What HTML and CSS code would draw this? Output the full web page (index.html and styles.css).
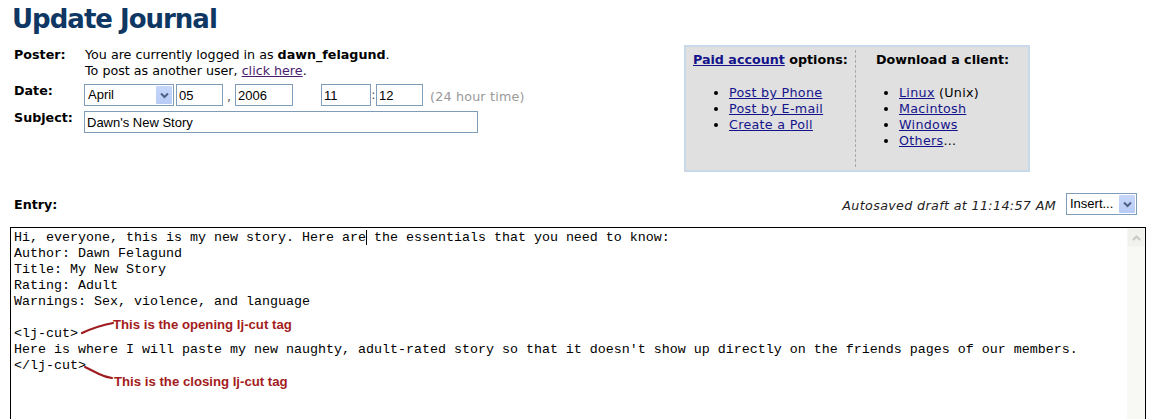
FILE: index.html
```html
<!DOCTYPE html>
<html lang="en">
<head>
<meta charset="UTF-8">
<title>Update Journal</title>
<link rel="stylesheet" href="styles.css">
</head>
<body>
    <h1 class="page-title">Update Journal</h1>

    <div class="top">
        <div class="form-fields">
            <div class="row">
                <span class="label">Poster:</span>
                <div class="value">
                    You are currently logged in as <b>dawn_felagund</b>.<br>
                    To post as another user, <a href="#" class="visited">click here</a>.
                </div>
            </div>
            <div class="row">
                <span class="label">Date:</span>
                <div class="value inline">
                    <span class="combo month">
                        <span class="combo-text">April</span>
                        <span class="combo-btn"><svg width="9" height="7" viewBox="0 0 9 7"><path d="M1 1.5 L4.5 5 L8 1.5" fill="none" stroke="#4d6185" stroke-width="2"/></svg></span>
                    </span>
                    <input type="text" class="field day" value="05">
                    <span class="sep">,</span>
                    <input type="text" class="field year" value="2006">
                    <input type="text" class="field hour" value="11">
                    <span class="sep colon">:</span>
                    <input type="text" class="field minute" value="12">
                    <span class="hint">(24 hour time)</span>
                </div>
            </div>
            <div class="row">
                <span class="label">Subject:</span>
                <div class="value">
                    <input type="text" class="field subject" value="Dawn's New Story">
                </div>
            </div>
        </div>

        <div class="options-box">
            <div class="options-col paid">
                <div class="options-head"><a href="#">Paid account</a> options:</div>
                <ul>
                    <li><a href="#">Post by Phone</a></li>
                    <li><a href="#">Post by E-mail</a></li>
                    <li><a href="#">Create a Poll</a></li>
                </ul>
            </div>
            <div class="options-col clients">
                <div class="options-head">Download a client:</div>
                <ul>
                    <li><a href="#">Linux</a> (Unix)</li>
                    <li><a href="#">Macintosh</a></li>
                    <li><a href="#">Windows</a></li>
                    <li><a href="#">Others</a>...</li>
                </ul>
            </div>
        </div>
    </div>

    <div class="entry-bar">
        <span class="label">Entry:</span>
        <div class="entry-tools">
            <span class="autosave">Autosaved draft at 11:14:57 AM</span>
            <span class="combo insert">
                <span class="combo-text">Insert...</span>
                <span class="combo-btn"><svg width="9" height="7" viewBox="0 0 9 7"><path d="M1 1.5 L4.5 5 L8 1.5" fill="none" stroke="#4d6185" stroke-width="2"/></svg></span>
            </span>
        </div>
    </div>

    <div class="editor">
        <div class="editor-text">
<pre>Hi, everyone, this is my new story. Here are<span class="caret"></span> the essentials that you need to know:
Author: Dawn Felagund
Title: My New Story
Rating: Adult
Warnings: Sex, violence, and language

&lt;lj-cut&gt;
Here is where I will paste my new naughty, adult-rated story so that it doesn't show up directly on the friends pages of our members.
&lt;/lj-cut&gt;</pre>
            <!-- annotations drawn over the text -->
            <svg class="arrows" width="200" height="170" viewBox="0 0 200 170">
                <path d="M71 105 Q86 98 102 95" fill="none" stroke="#9e1b1f" stroke-width="2.2" stroke-linecap="round"/>
                <path d="M74 139 Q84 144 88 146 Q94 149 101 150" fill="none" stroke="#9e1b1f" stroke-width="2" stroke-linecap="round"/>
            </svg>
            <span class="note note-open">This is the opening lj-cut tag</span>
            <span class="note note-close">This is the closing lj-cut tag</span>
        </div>
        <div class="scrollbar">
            <span class="scroll-up"><svg width="9" height="6" viewBox="0 0 9 6"><path d="M1 5 L4.5 1.5 L8 5" fill="none" stroke="#c9c9c4" stroke-width="2"/></svg></span>
        </div>
    </div>
</body>
</html>
```

FILE: styles.css
```css
body {
    margin: 0;
    padding: 0 12px;
    font-family: "DejaVu Sans", Verdana, sans-serif;
    font-size: 12.7px;
    color: #000;
    background: #fff;
}

a {
    color: #14148a;
}

a.visited {
    color: #4a1c6e;
}

.page-title {
    margin: 0;
    padding-top: 3px;
    font-size: 26px;
    line-height: 32px;
    color: #0f3763;
    letter-spacing: -1px;
}

.top {
    display: flex;
    margin-top: 10px;
}

.form-fields {
    width: 672px;
    padding-top: 2px;
    display: flex;
    flex-direction: column;
    gap: 5px;
}

.row {
    display: grid;
    grid-template-columns: 72px 1fr;
    align-items: start;
}

.label {
    font-weight: bold;
    line-height: 16px;
    padding-left: 2px;
}

.value {
    line-height: 16px;
    padding-left: 1px;
}

.value.inline {
    display: flex;
    align-items: center;
    padding-left: 0;
}

.row + .row .label {
    margin-top: -1px;
}

.field {
    box-sizing: border-box;
    height: 22px;
    border: 1px solid #7f9db9;
    padding: 1px 2px;
    margin: 0;
    font-family: "Liberation Sans", Arial, sans-serif;
    font-size: 13px;
    color: #000;
    background: #fff;
}

.day {
    width: 47px;
    margin-left: 2px;
}

.minute {
    width: 47px;
}

.year {
    width: 58px;
}

.hour {
    width: 50px;
    margin-left: 28px;
}

.subject {
    width: 394px;
    margin-left: -1px;
}

.sep {
    width: 12px;
    text-align: center;
    color: #555;
    padding-top: 4px;
}

.sep.colon {
    width: 5px;
    padding-top: 0;
}

.hint {
    margin-left: 7px;
    color: #999;
    padding-top: 3px;
    letter-spacing: 0.2px;
}

.combo {
    box-sizing: border-box;
    display: inline-flex;
    align-items: stretch;
    height: 22px;
    border: 1px solid #7f9db9;
    background: #fff;
    font-family: "Liberation Sans", Arial, sans-serif;
    font-size: 13px;
}

.combo-text {
    flex: 1;
    padding: 2px 0 0 3px;
}

.combo-btn {
    width: 16px;
    margin: 1px;
    display: flex;
    align-items: center;
    justify-content: center;
    background: linear-gradient(#c7d7fb, #b7cbf5);
    border-radius: 1px;
}

.month {
    width: 90px;
}

.insert {
    width: 71px;
}

.options-box {
    box-sizing: border-box;
    width: 346px;
    height: 127px;
    border: 2px solid #cad9ea;
    background: #e0e0e0;
    display: flex;
    padding: 3px 0;
}

.options-col {
    line-height: 16px;
}

.options-col.paid {
    width: 162px;
    padding-left: 7px;
    border-right: 1px dashed #a8a8a8;
}

.options-col.clients {
    padding-left: 20px;
}

.options-head {
    font-weight: bold;
    margin-top: 2px;
    white-space: nowrap;
}

.options-head a {
    color: #14148a;
}

.options-col ul {
    margin: 17px 0 0;
    padding-left: 36px;
    letter-spacing: 0.3px;
}

.options-col.clients ul {
    padding-left: 23px;
}

.entry-bar {
    display: flex;
    justify-content: space-between;
    align-items: center;
    margin-top: 21px;
    height: 22px;
    padding-right: 9px;
}

.entry-bar .label {
    padding-top: 2px;
}

.entry-tools {
    display: flex;
    align-items: center;
    gap: 10px;
}

.autosave {
    font-style: italic;
    color: #222;
    padding-top: 3px;
    letter-spacing: 0.35px;
}

.editor {
    display: flex;
    margin: 12px 0 0 -2px;
    height: 200px;
    border: 1px solid #000;
}

.editor-text {
    flex: 1;
    position: relative;
    padding: 2px 3px 1px;
}

.editor-text pre {
    margin: 0;
    font-family: "Liberation Mono", "Courier New", monospace;
    font-size: 13.33px;
    line-height: 16px;
    color: #000;
}

.caret {
    border-left: 1px solid #000;
    margin-right: -1px;
}

.arrows {
    position: absolute;
    left: 0;
    top: 0;
}

.note {
    position: absolute;
    font-family: "Liberation Sans", Arial, sans-serif;
    font-weight: bold;
    font-size: 13.2px;
    line-height: 14px;
    color: #a31c20;
    white-space: nowrap;
}

.note-open {
    left: 102px;
    top: 90px;
}

.note-close {
    left: 103px;
    top: 147px;
}

.scrollbar {
    width: 18px;
    background: #f8f8f5;
    display: flex;
    flex-direction: column;
}

.scroll-up {
    height: 17px;
    display: flex;
    align-items: center;
    justify-content: center;
    background: #f1f1ed;
    border: 1px solid #f6f6f3;
}
```
